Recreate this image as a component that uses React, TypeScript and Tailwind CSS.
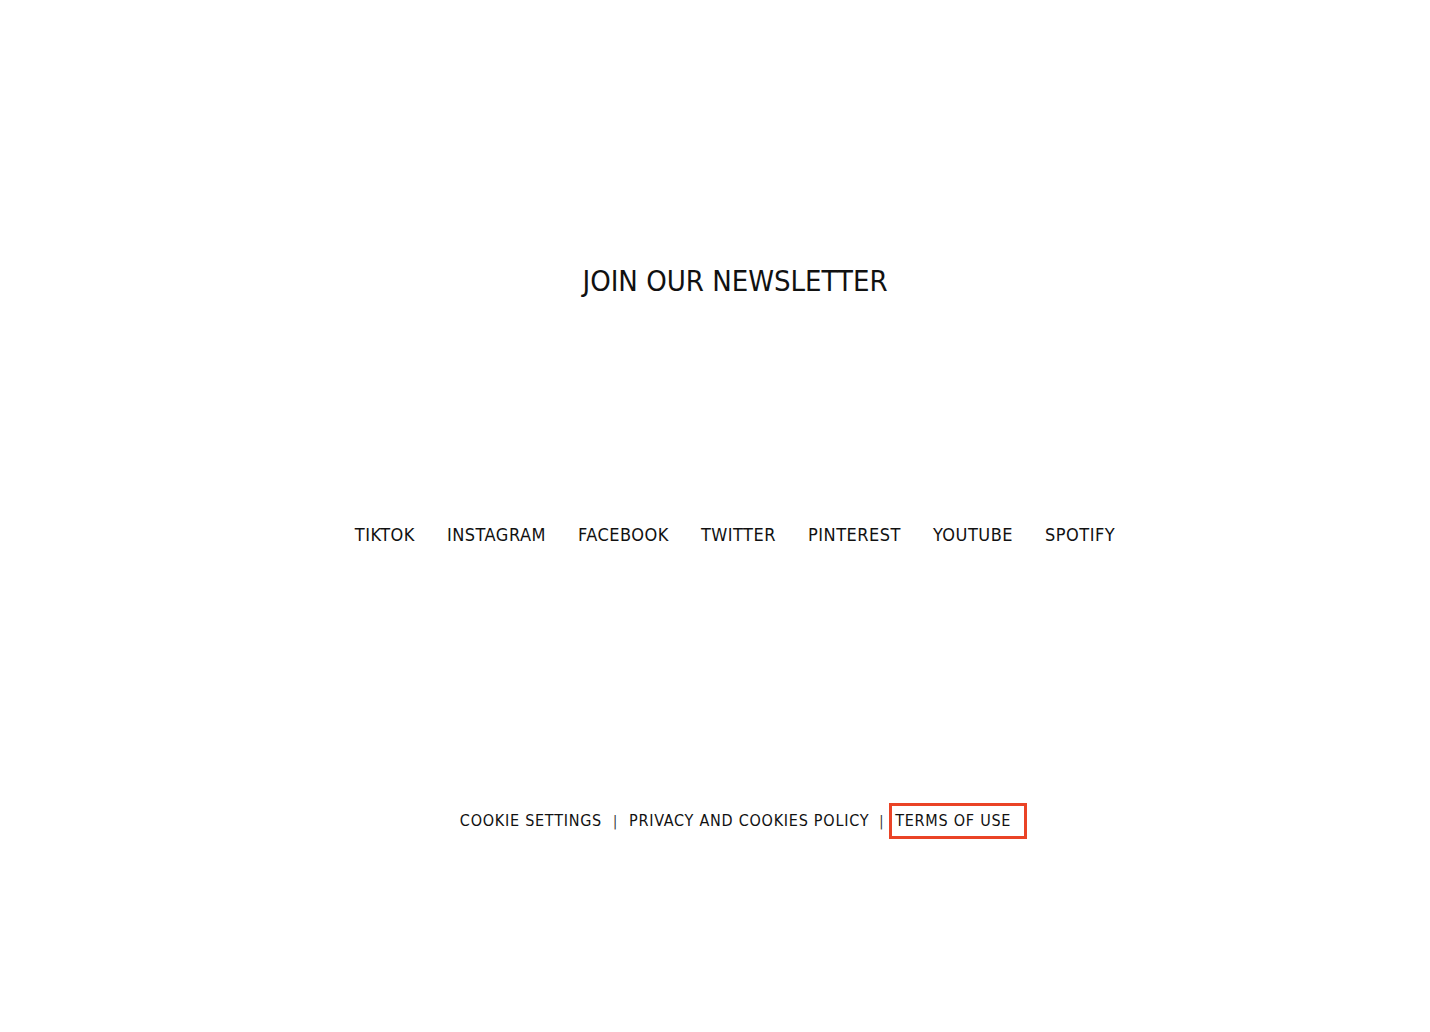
const socials = ["TIKTOK", "INSTAGRAM", "FACEBOOK", "TWITTER", "PINTEREST", "YOUTUBE", "SPOTIFY"];

export default function App() {
  return (
    <div
      className="w-[1430px] h-[1032px] bg-white text-[#111] flex flex-col items-center pl-[40px]"
      style={{ fontFamily: '"Liberation Sans Narrow", "DejaVu Sans Condensed", "Liberation Sans", sans-serif' }}
    >
      <h2 className="mt-[263px] text-[29px] leading-[36px] font-normal">JOIN OUR NEWSLETTER</h2>

      <nav className="mt-[224px] flex items-center gap-[32px] text-[18px] leading-[24px] tracking-[0.5px]">
        {socials.map((s) => (
          <a key={s} href="#" className="text-[#111]">
            {s}
          </a>
        ))}
      </nav>

      <footer className="mt-[256px] ml-[17px] flex items-center text-[16px] leading-[24px] tracking-[0.75px]">
        <a href="#">COOKIE SETTINGS</a>
        <span className="mx-[11px] text-[14px] text-[#333]">|</span>
        <a href="#">PRIVACY AND COOKIES POLICY</a>
        <span className="ml-[10px] text-[14px] text-[#333]">|</span>
        <a href="#" className="ml-[5px] pl-[3px] pr-[13px] py-[3px] border-[3px] border-[#ea4326]">
          TERMS OF USE
        </a>
      </footer>
    </div>
  );
}
